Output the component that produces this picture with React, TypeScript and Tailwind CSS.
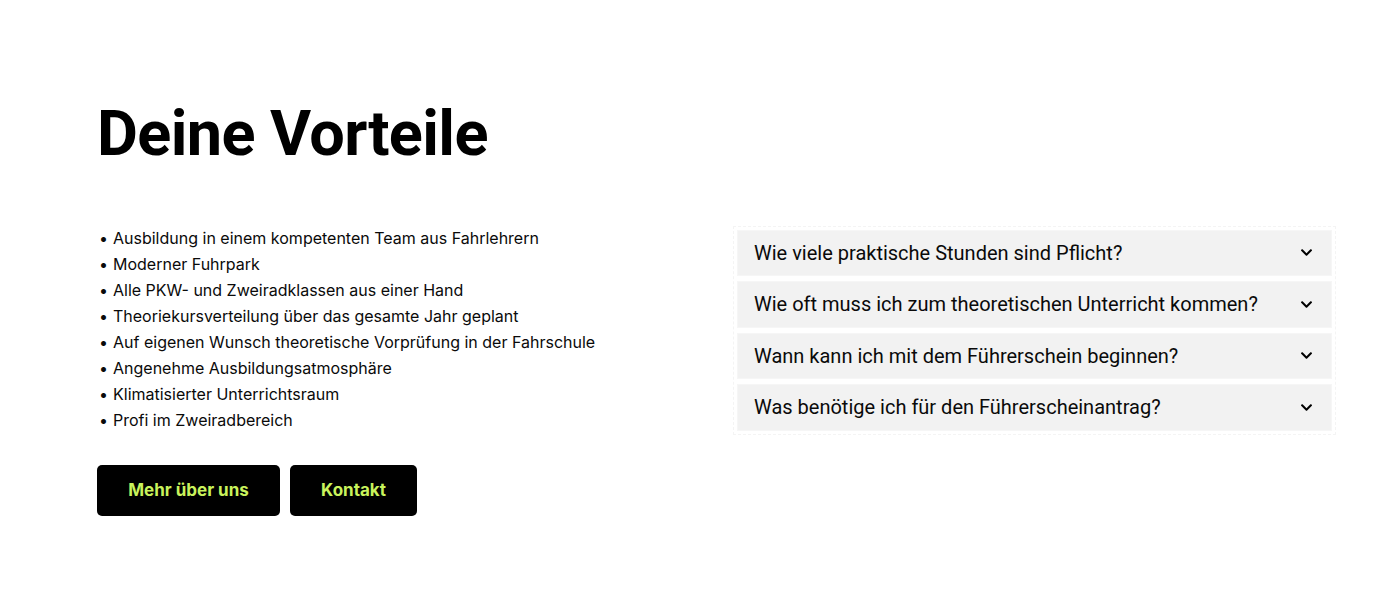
import { useState } from 'react';

const VORTEILE = [
  'Ausbildung in einem kompetenten Team aus Fahrlehrern',
  'Moderner Fuhrpark',
  'Alle PKW- und Zweiradklassen aus einer Hand',
  'Theoriekursverteilung über das gesamte Jahr geplant',
  'Auf eigenen Wunsch theoretische Vorprüfung in der Fahrschule',
  'Angenehme Ausbildungsatmosphäre',
  'Klimatisierter Unterrichtsraum',
  'Profi im Zweiradbereich',
];

const FAQ = [
  'Wie viele praktische Stunden sind Pflicht?',
  'Wie oft muss ich zum theoretischen Unterricht kommen?',
  'Wann kann ich mit dem Führerschein beginnen?',
  'Was benötige ich für den Führerscheinantrag?',
];

function Chevron() {
  return (
    <svg viewBox="0 0 448 512" className="w-[13px] h-[13px]" fill="currentColor">
      <path d="M207.029 381.476L12.686 187.132c-9.373-9.373-9.373-24.569 0-33.941l22.667-22.667c9.357-9.357 24.522-9.375 33.901-.04L224 284.505l154.745-154.021c9.379-9.335 24.544-9.317 33.901.04l22.667 22.667c9.373 9.373 9.373 24.569 0 33.941L240.971 381.476c-9.373 9.372-24.569 9.372-33.942 0z" />
    </svg>
  );
}

export default function App() {
  const [open, setOpen] = useState<number | null>(null);

  return (
    <div className="w-[1400px] h-[600px] bg-white text-black overflow-hidden">
      <div className="pl-[97px] pt-[96px]">
        <h1 className="text-[63px] leading-[1.2] font-bold tracking-[-0.6px] font-['Roboto',sans-serif]">
          Deine Vorteile
        </h1>

        <div className="flex items-start mt-[53px]">
          {/* Vorteile-Liste */}
          <div className="w-[636px] shrink-0">
            <ul className="font-['Inter',sans-serif] text-[16px] leading-[26px] text-[#0a0a0a]">
              {VORTEILE.map((v) => (
                <li key={v} className="flex">
                  <span className="w-[16px] shrink-0 pl-[2px]">•</span>
                  <span>{v}</span>
                </li>
              ))}
            </ul>
            <div className="flex gap-[10px] mt-[32px] font-['Inter',sans-serif]">
              <button className="w-[183px] h-[51px] bg-black rounded-[5px] text-[#c9f35c] font-bold text-[17px] pt-[2px]">
                Mehr über uns
              </button>
              <button className="w-[127px] h-[51px] bg-black rounded-[5px] text-[#c9f35c] font-bold text-[17px] pt-[2px]">
                Kontakt
              </button>
            </div>
          </div>

          {/* FAQ */}
          <div className="w-[603px] mt-[1px] p-[3px] border border-dashed border-[#f4f4f4] flex flex-col gap-[5px] font-['Roboto',sans-serif]">
            {FAQ.map((q, i) => (
              <button
                key={q}
                onClick={() => setOpen(open === i ? null : i)}
                className="h-[46.5px] bg-[#f2f2f2] border border-[#f6f6f6] flex items-center justify-between pl-[16px] pr-[18px] text-left"
              >
                <span className="text-[20px] text-[#0a0a0a]">{q}</span>
                <Chevron />
              </button>
            ))}
          </div>
        </div>
      </div>
    </div>
  );
}
